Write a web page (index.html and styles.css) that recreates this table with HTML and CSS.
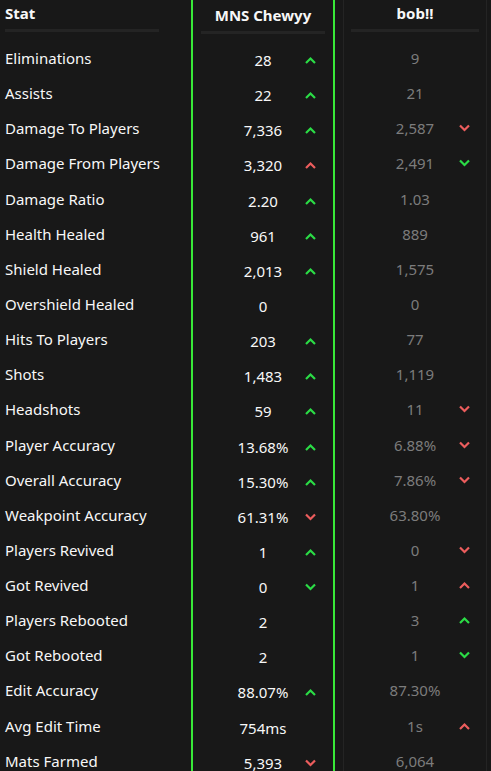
FILE: index.html
```html
<html>

<head>
    <meta charset="UTF-8">
    <link rel="stylesheet" href="styles.css">
</head>

<body>
    <div class="compare">
        <div class="col stat_col">
            <div class="head">Stat</div>
            <div class="line"></div>
            <div class="row">Eliminations</div>
            <div class="row">Assists</div>
            <div class="row">Damage To Players</div>
            <div class="row">Damage From Players</div>
            <div class="row">Damage Ratio</div>
            <div class="row">Health Healed</div>
            <div class="row">Shield Healed</div>
            <div class="row">Overshield Healed</div>
            <div class="row">Hits To Players</div>
            <div class="row">Shots</div>
            <div class="row">Headshots</div>
            <div class="row">Player Accuracy</div>
            <div class="row">Overall Accuracy</div>
            <div class="row">Weakpoint Accuracy</div>
            <div class="row">Players Revived</div>
            <div class="row">Got Revived</div>
            <div class="row">Players Rebooted</div>
            <div class="row">Got Rebooted</div>
            <div class="row">Edit Accuracy</div>
            <div class="row">Avg Edit Time</div>
            <div class="row">Mats Farmed</div>
        </div>

        <div class="col player you" id="player_1"></div>
        <div class="col player other" id="player_2"></div>
    </div>

    <script src="script.js"></script>
</body>

</html>
```

FILE: styles.css
```css
* {
    font-family: "Noto Sans", sans-serif;
    box-sizing: border-box;
}
body {
    margin: 0;
    background-color: #181818;
    color: #f7f7f7;
    font-size: 15px;
    height: 771px;
    overflow: hidden;
}
.compare {
    display: flex;
    flex-direction: row;
    align-items: stretch;
    min-height: 800px;
}
.col {
    display: flex;
    flex-direction: column;
}
.stat_col {
    width: 191px;
    padding-left: 5px;
}
.head {
    height: 29px;
    flex-shrink: 0;
    padding-bottom: 3px;
    display: flex;
    align-items: center;
    font-weight: 700;
}
.player .head {
    justify-content: center;
}
.line {
    height: 3px;
    background-color: #242424;
    margin-bottom: 8.4px;
    flex-shrink: 0;
}
.stat_col .line {
    width: 154px;
}
.row {
    height: 35.15px;
    flex-shrink: 0;
    display: flex;
    align-items: center;
    white-space: nowrap;
}
.player {
    width: 144px;
}
.player .row {
    display: grid;
    grid-template-columns: 1fr auto 1fr;
    align-items: center;
}
.value {
    grid-column: 2;
    text-align: center;
}
.arrow {
    grid-column: 3;
    justify-self: end;
    width: 11px;
    height: 8px;
    display: flex;
    margin-right: 9px;
}
.up_good, .down_good {
    color: #2bdc46;
}
.up_bad, .down_bad {
    color: #ec5d5d;
}
.you {
    border-left: 2px solid #38e838;
    border-right: 2px solid #38e838;
    padding: 2px 8px 0 8px;
    margin-right: 8px;
}
.other {
    border-left: 1px solid #242424;
    border-right: 1px solid #242424;
    padding: 0 7px;
    color: #7c7c7c;
}
.other .head {
    color: #f7f7f7;
}
```

FILE: script.js
```js
// [stat value, trend] for each player, same order as the stat column
var players = [
    {
        name: "MNS Chewyy", id: "player_1",
        stats: [
            ["28", "up_good"], ["22", "up_good"], ["7,336", "up_good"], ["3,320", "up_bad"],
            ["2.20", "up_good"], ["961", "up_good"], ["2,013", "up_good"], ["0", ""],
            ["203", "up_good"], ["1,483", "up_good"], ["59", "up_good"], ["13.68%", "up_good"],
            ["15.30%", "up_good"], ["61.31%", "down_bad"], ["1", "up_good"], ["0", "down_good"],
            ["2", ""], ["2", ""], ["88.07%", "up_good"], ["754ms", ""], ["5,393", "down_bad"]
        ]
    },
    {
        name: "bob!!", id: "player_2",
        stats: [
            ["9", ""], ["21", ""], ["2,587", "down_bad"], ["2,491", "down_good"],
            ["1.03", ""], ["889", ""], ["1,575", ""], ["0", ""],
            ["77", ""], ["1,119", ""], ["11", "down_bad"], ["6.88%", "down_bad"],
            ["7.86%", "down_bad"], ["63.80%", ""], ["0", "down_bad"], ["1", "up_bad"],
            ["3", "up_good"], ["1", "down_good"], ["87.30%", ""], ["1s", "up_bad"], ["6,064", ""]
        ]
    }
];

function chevron(trend) {
    if (trend == "") return "";
    var pts = trend.indexOf("up") == 0 ? "1,7 5.5,2.5 10,7" : "1,1.5 5.5,6 10,1.5";
    return '<svg width="11" height="8" viewBox="0 0 11 8"><polyline points="' + pts +
        '" fill="none" stroke="currentColor" stroke-width="2.2"/></svg>';
}

for (var p = 0; p < players.length; p++) {
    var col = document.getElementById(players[p].id);
    var html = '<div class="head">' + players[p].name + '</div><div class="line"></div>';
    for (var i = 0; i < players[p].stats.length; i++) {
        var s = players[p].stats[i];
        html += '<div class="row"><span class="value">' + s[0] + '</span>' +
            '<span class="arrow ' + s[1] + '">' + chevron(s[1]) + '</span></div>';
    }
    col.innerHTML = html;
}
```
